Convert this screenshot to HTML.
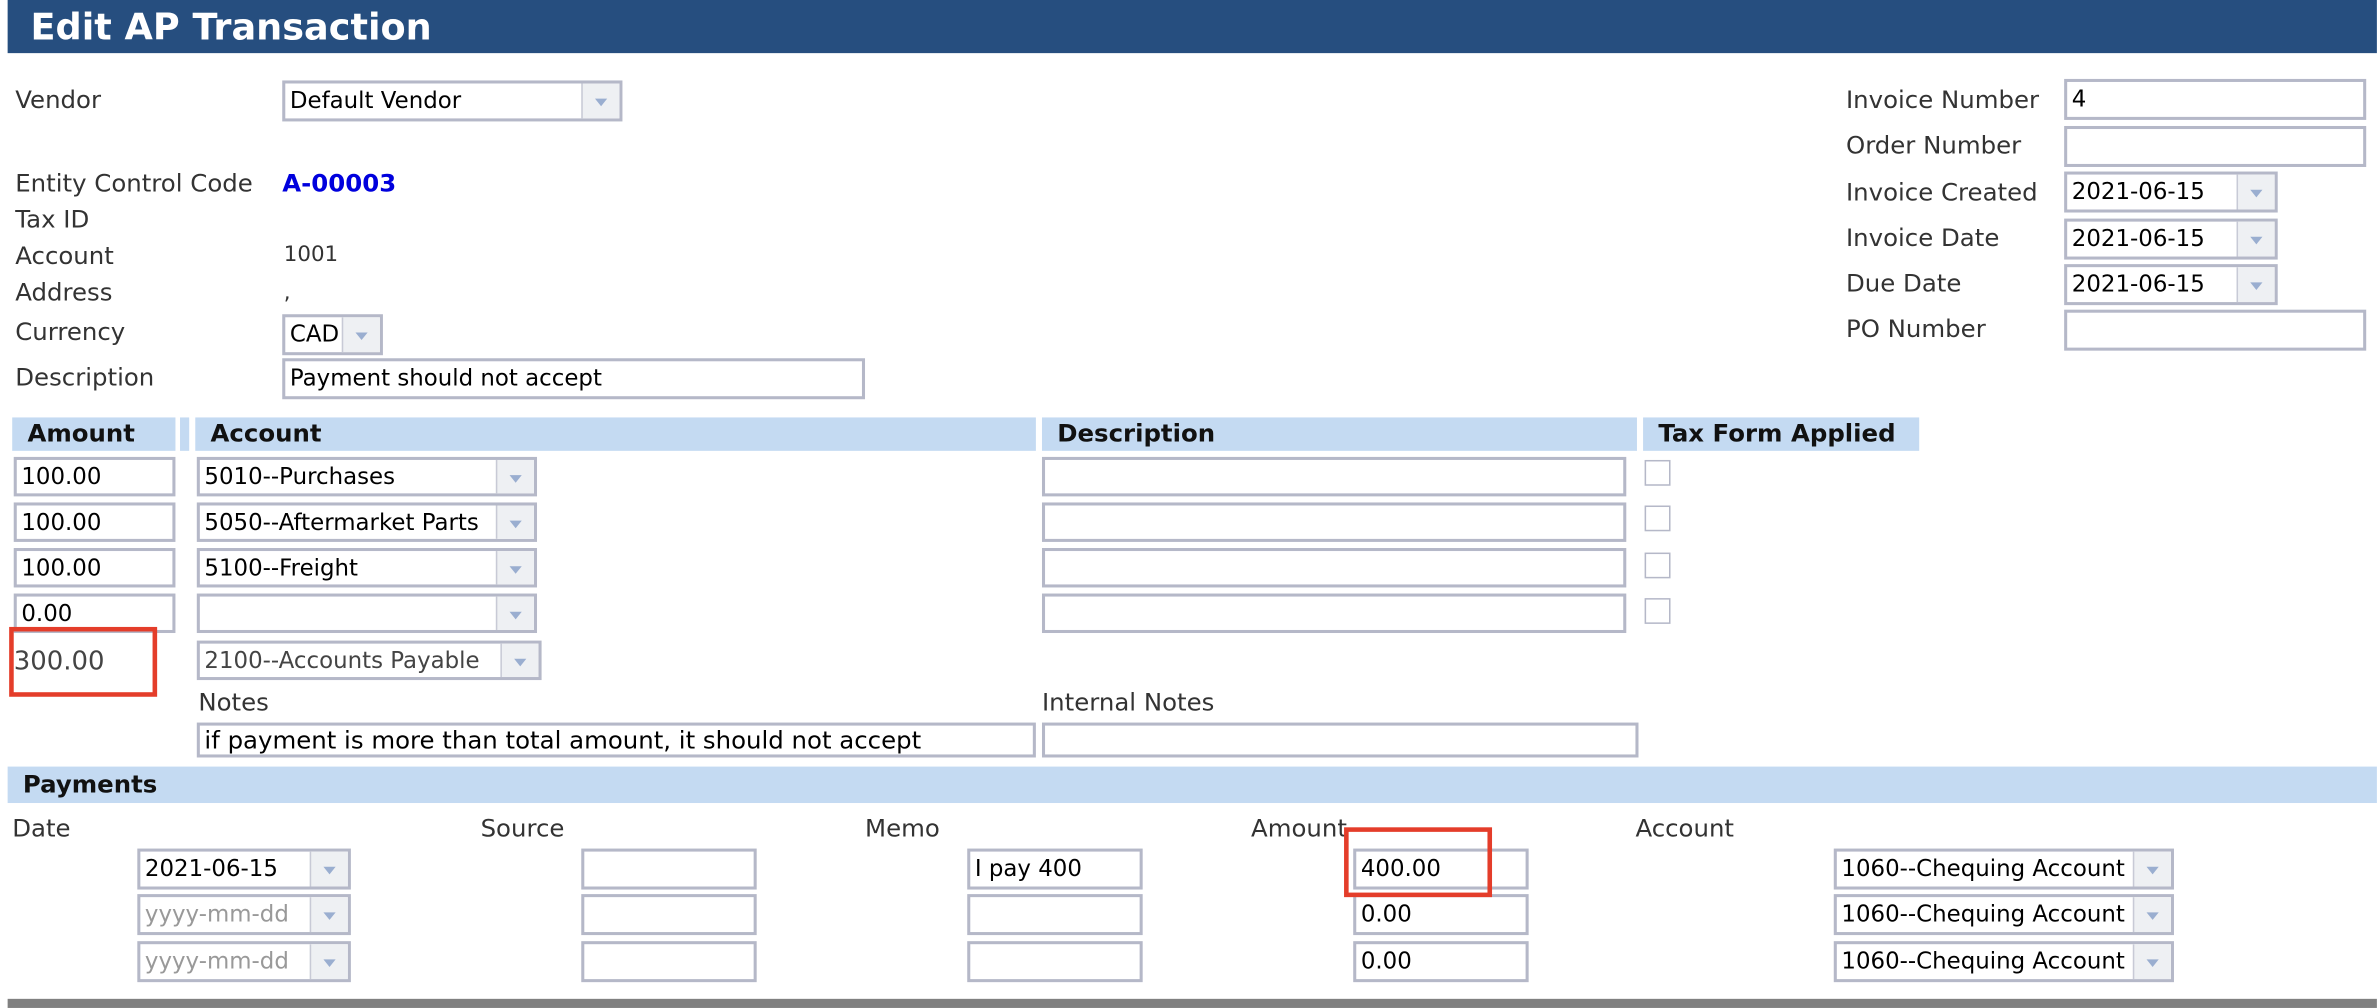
<!DOCTYPE html>
<html><head><meta charset="utf-8"><style>
html,body{margin:0;padding:0;background:#fff;width:2380px;height:1008px;overflow:hidden}
#w{position:absolute;left:0;top:0;width:1560px;height:664px;transform:scale(1.5256,1.518);transform-origin:0 0;font-family:"DejaVu Sans","Liberation Sans",sans-serif;font-size:16px;color:#333}
.a{position:absolute;white-space:nowrap}
.l{position:absolute;white-space:nowrap;line-height:20px}
.in{position:absolute;box-sizing:border-box;border:2px solid #b5b8c8;background:#fff;color:#000;font-size:15px;line-height:22px;padding-left:3px;overflow:hidden;white-space:nowrap}
.sel .btn{position:absolute;right:0;top:0;bottom:0;width:24px;background:#eef0f3;border-left:1px solid #c8cad6}
.sel .btn:after{content:"";position:absolute;left:8px;top:10px;border-left:4px solid transparent;border-right:4px solid transparent;border-top:5px solid #9aaed0}
.hd{position:absolute;background:#c4daf2;font-weight:bold;color:#111;line-height:22px;padding-left:10px;box-sizing:border-box;font-size:16px}
.cb{position:absolute;width:17px;height:17px;border:1px solid #b5b8c8;background:#fff;box-sizing:border-box}
.red{position:absolute;border:3px solid #e43d2a;box-sizing:border-box}
.ph{color:#999}
</style></head><body><div id="w">
<div class="a" style="left:5px;top:0;width:1553px;height:35px;background:#264e7f"></div>
<div class="a" style="left:20px;top:2px;color:#fff;font-weight:bold;font-size:24px;line-height:32px">Edit AP Transaction</div>

<div class="l" style="left:10px;top:56px">Vendor</div>
<div class="in sel" style="left:185px;top:53px;width:223px;height:27px">Default Vendor<span class="btn"></span></div>
<div class="l" style="left:10px;top:111px">Entity Control Code</div>
<div class="l" style="left:185px;top:111px;color:#0000dd;font-weight:bold">A-00003</div>
<div class="l" style="left:10px;top:135px">Tax ID</div>
<div class="l" style="left:10px;top:159px">Account</div>
<div class="l" style="left:186px;top:158px;font-size:14px">1001</div>
<div class="l" style="left:10px;top:183px">Address</div>
<div class="l" style="left:186px;top:183px;font-size:14px">,</div>
<div class="l" style="left:10px;top:209px">Currency</div>
<div class="in sel" style="left:185px;top:207px;width:66px;height:27px">CAD<span class="btn"></span></div>
<div class="l" style="left:10px;top:239px">Description</div>
<div class="in" style="left:185px;top:236px;width:382px;height:27px">Payment should not accept</div>

<div class="l" style="left:1210px;top:56px">Invoice Number</div>
<div class="in" style="left:1353px;top:52px;width:198px;height:27px">4</div>
<div class="l" style="left:1210px;top:86px">Order Number</div>
<div class="in" style="left:1353px;top:83px;width:198px;height:27px"></div>
<div class="l" style="left:1210px;top:117px">Invoice Created</div>
<div class="in sel" style="left:1353px;top:113px;width:140px;height:27px">2021-06-15<span class="btn"></span></div>
<div class="l" style="left:1210px;top:147px">Invoice Date</div>
<div class="in sel" style="left:1353px;top:144px;width:140px;height:27px">2021-06-15<span class="btn"></span></div>
<div class="l" style="left:1210px;top:177px">Due Date</div>
<div class="in sel" style="left:1353px;top:174px;width:140px;height:27px">2021-06-15<span class="btn"></span></div>
<div class="l" style="left:1210px;top:207px">PO Number</div>
<div class="in" style="left:1353px;top:204px;width:198px;height:27px"></div>

<div class="hd" style="left:8px;top:275px;width:107px;height:22px">Amount</div>
<div class="hd" style="left:118px;top:275px;width:6px;height:22px;padding:0"></div>
<div class="hd" style="left:128px;top:275px;width:551px;height:22px">Account</div>
<div class="hd" style="left:683px;top:275px;width:390px;height:22px">Description</div>
<div class="hd" style="left:1077px;top:275px;width:181px;height:22px;overflow:visible;white-space:nowrap">Tax Form Applied</div>

<div class="in" style="left:9px;top:301px;width:106px;height:26px">100.00</div>
<div class="in sel" style="left:129px;top:301px;width:223px;height:26px">5010--Purchases<span class="btn"></span></div>
<div class="in" style="left:683px;top:301px;width:383px;height:26px"></div>
<div class="cb" style="left:1078px;top:303px"></div>
<div class="in" style="left:9px;top:331px;width:106px;height:26px">100.00</div>
<div class="in sel" style="left:129px;top:331px;width:223px;height:26px">5050--Aftermarket Parts<span class="btn"></span></div>
<div class="in" style="left:683px;top:331px;width:383px;height:26px"></div>
<div class="cb" style="left:1078px;top:333px"></div>
<div class="in" style="left:9px;top:361px;width:106px;height:26px">100.00</div>
<div class="in sel" style="left:129px;top:361px;width:223px;height:26px">5100--Freight<span class="btn"></span></div>
<div class="in" style="left:683px;top:361px;width:383px;height:26px"></div>
<div class="cb" style="left:1078px;top:364px"></div>
<div class="in" style="left:9px;top:391px;width:106px;height:26px">0.00</div>
<div class="in sel" style="left:129px;top:391px;width:223px;height:26px"><span class="btn"></span></div>
<div class="in" style="left:683px;top:391px;width:383px;height:26px"></div>
<div class="cb" style="left:1078px;top:394px"></div>
<div class="l" style="left:9px;top:426px;font-size:17px;color:#444">300.00</div>
<div class="in sel" style="left:129px;top:422px;width:226px;height:26px;color:#444">2100--Accounts Payable<span class="btn"></span></div>
<div class="red" style="left:6px;top:413px;width:97px;height:46px"></div>
<div class="l" style="left:130px;top:453px">Notes</div>
<div class="l" style="left:683px;top:453px">Internal Notes</div>
<div class="in" style="left:129px;top:476px;width:550px;height:23px;line-height:19px;font-size:16px">if payment is more than total amount, it should not accept</div>
<div class="in" style="left:683px;top:476px;width:391px;height:23px"></div>

<div class="hd" style="left:5px;top:505px;width:1553px;height:24px;line-height:24px">Payments</div>
<div class="l" style="left:8px;top:536px">Date</div>
<div class="l" style="left:315px;top:536px">Source</div>
<div class="l" style="left:567px;top:536px">Memo</div>
<div class="l" style="left:820px;top:536px">Amount</div>
<div class="l" style="left:1072px;top:536px">Account</div>

<div class="in sel" style="left:90px;top:559px;width:140px;height:27px">2021-06-15<span class="btn"></span></div>
<div class="in" style="left:381px;top:559px;width:115px;height:27px"></div>
<div class="in" style="left:634px;top:559px;width:115px;height:27px">I pay 400</div>
<div class="in" style="left:887px;top:559px;width:115px;height:27px">400.00</div>
<div class="in sel" style="left:1202px;top:559px;width:223px;height:27px">1060--Chequing Account<span class="btn"></span></div>
<div class="in sel" style="left:90px;top:589px;width:140px;height:27px"><span class="ph">yyyy-mm-dd</span><span class="btn"></span></div>
<div class="in" style="left:381px;top:589px;width:115px;height:27px"></div>
<div class="in" style="left:634px;top:589px;width:115px;height:27px"></div>
<div class="in" style="left:887px;top:589px;width:115px;height:27px">0.00</div>
<div class="in sel" style="left:1202px;top:589px;width:223px;height:27px">1060--Chequing Account<span class="btn"></span></div>
<div class="in sel" style="left:90px;top:620px;width:140px;height:27px"><span class="ph">yyyy-mm-dd</span><span class="btn"></span></div>
<div class="in" style="left:381px;top:620px;width:115px;height:27px"></div>
<div class="in" style="left:634px;top:620px;width:115px;height:27px"></div>
<div class="in" style="left:887px;top:620px;width:115px;height:27px">0.00</div>
<div class="in sel" style="left:1202px;top:620px;width:223px;height:27px">1060--Chequing Account<span class="btn"></span></div>
<div class="red" style="left:881px;top:545px;width:97px;height:46px"></div>

<div class="a" style="left:5px;top:658px;width:1553px;height:6px;background:#808080"></div>
</div></body></html>
